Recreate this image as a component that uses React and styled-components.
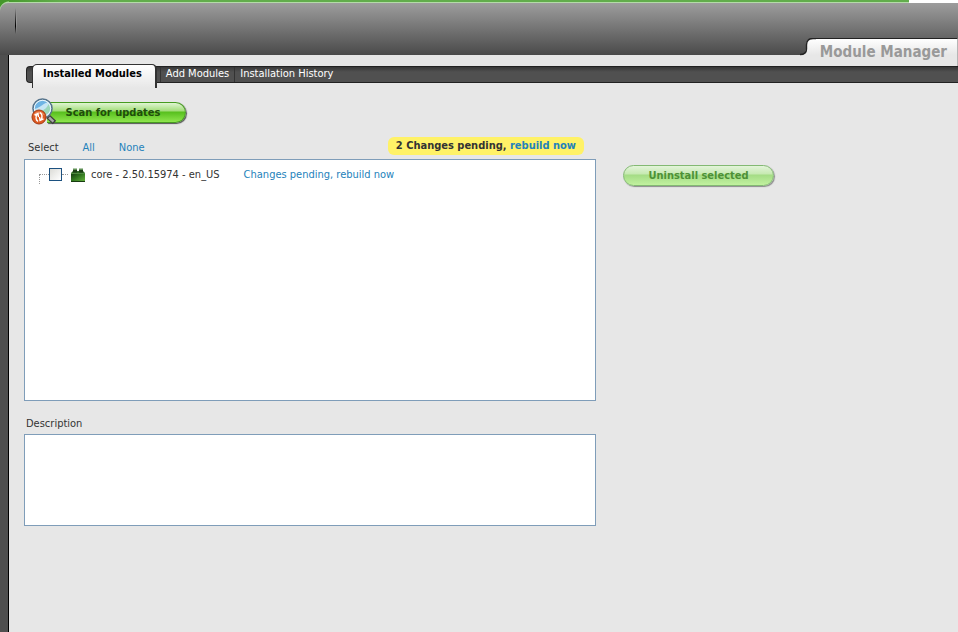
import React, { useState } from "react";
import styled, { createGlobalStyle } from "styled-components";

const TABS = ["Installed Modules", "Add Modules", "Installation History"];

const MagnifierIcon = () => (
  <svg width="26" height="28" viewBox="0 0 26 28" aria-hidden="true">
    <path d="M17 18.500l6.500 6" stroke="#3d3d3d" strokeWidth="5" />
    <path d="M18 19.500l4.500 4.200" stroke="#a8a8a8" strokeWidth="2.400" />
    <circle cx="11.500" cy="10.500" r="9.500" fill="#c7e6f4" stroke="#56748c" strokeWidth="1.600" />
    <path d="M3.500 11a8 8 0 0 1 13-6.500C12.500 5 10.500 9 3.500 11z" fill="#6fb4e4" />
    <path d="M10 13q6-2 7.500-7q3.500 5 0 9q-4 4-7.500-2z" fill="#9bd6b8" />
    <circle cx="11.500" cy="10.500" r="8.200" fill="none" stroke="#eaf6fc" />
    <circle cx="8" cy="19" r="7" fill="#dd5a22" stroke="#a33a14" />
    <path d="M2.500 17a6 6 0 0 1 11 0q-5.500-2-11 0z" fill="#ee8a5e" />
    <path
      d="M7 23.500q-3.500-3-1-7M3.500 17.200L7 15.500l.5 3.500M9 14.500q3.500 3 1 7M12.500 20.800L9 22.500 8.500 19"
      fill="none"
      stroke="#fff"
      strokeWidth="1.400"
    />
  </svg>
);

const BrickIcon = () => (
  <svg width="14" height="14" viewBox="0 0 14 14" aria-hidden="true">
    <defs>
      <linearGradient id="brick" x2="1" y2="1">
        <stop stopColor="#123a10" />
        <stop offset="0.500" stopColor="#347a22" />
        <stop offset="1" stopColor="#67b43f" />
      </linearGradient>
    </defs>
    <path d="M0 5l2-2h10l2 2v8H0z" fill="#2e6a25" />
    <path d="M0 5h14v8.500H0z" fill="url(#brick)" />
    <path d="M2 1h4v3.500H2zM8 1h4v3.500H8z" fill="#1a3d16" />
    <path d="M2 .5h4v1.500H2zM8 .5h4v1.500H8z" fill="#5f8f55" />
    <path d="M0 5h14v1H0z" fill="#4f8a41" />
    <path d="M0 13h14v1H0z" fill="#173c10" />
  </svg>
);

const TitleCurve = () => (
  <svg width="16" height="28" viewBox="0 0 16 28" aria-hidden="true">
    <defs>
      <linearGradient id="title" x2="0" y2="1">
        <stop stopColor="#fff" />
        <stop offset="0.600" stopColor="#e7e7e7" />
      </linearGradient>
    </defs>
    <path d="M0 28V17Q6 17 6 11V7Q6 1 13 1h3v27z" fill="url(#title)" />
    <path d="M0 16.500Q6.500 16.500 6.500 11V7Q6.500 .5 13 .5h3" fill="none" stroke="#222" strokeWidth="1.400" />
  </svg>
);

const App = () => {
  const [tab, setTab] = useState(TABS[0]);
  const [checked, setChecked] = useState(false);
  const [description, setDescription] = useState("");

  return (
    <>
      <GlobalStyle />
      <TopStrip />
      <Header>
        <HeaderMark />
      </Header>
      <Page>
        <TitleRow>
          <TitleCurve />
          <Title>Module Manager</Title>
        </TitleRow>
        <TabBar>
          {TABS.map(name => (
            <Tab key={name} $active={name === tab} onClick={() => setTab(name)}>
              {name}
            </Tab>
          ))}
        </TabBar>
        <Content>
          <ScanRow>
            <MagnifierIcon />
            <ScanButton>Scan for updates</ScanButton>
          </ScanRow>
          <Columns>
            <Main>
              <SelectRow>
                <span>Select</span>
                <Link href="#all" onClick={() => setChecked(true)}>All</Link>
                <Link href="#none" onClick={() => setChecked(false)}>None</Link>
                <Notice>
                  2 Changes pending, <Link href="#rebuild">rebuild now</Link>
                </Notice>
              </SelectRow>
              <ModuleList>
                <Module>
                  <Branch />
                  <Checkbox
                    id="core"
                    type="checkbox"
                    checked={checked}
                    onChange={e => setChecked(e.target.checked)}
                  />
                  <Twig />
                  <BrickIcon />
                  <ModuleName htmlFor="core">core - 2.50.15974 - en_US</ModuleName>
                  <Link href="#rebuild">Changes pending, rebuild now</Link>
                </Module>
              </ModuleList>
              <DescriptionLabel htmlFor="description">Description</DescriptionLabel>
              <Description
                id="description"
                value={description}
                onChange={e => setDescription(e.target.value)}
              />
            </Main>
            <UninstallButton>Uninstall selected</UninstallButton>
          </Columns>
        </Content>
      </Page>
    </>
  );
};

const GlobalStyle = createGlobalStyle`
  * {
    box-sizing: border-box;
  }

  html,
  body,
  #root {
    height: 100%;
  }

  body {
    margin: 0;
    overflow: hidden;
    background: #e7e7e7;
    color: #333;
    font-family: "DejaVu Sans Condensed", "Noto Sans", sans-serif;
    font-size: 11px;
    line-height: 14px;
  }

  #root {
    display: flex;
    flex-direction: column;
  }

  button,
  textarea {
    font: inherit;
  }

  svg {
    display: block;
    flex: none;
  }
`;

const TopStrip = styled.div`
  flex: none;
  height: 11px;
  margin: 0 49px -8px 0;
  background:
    radial-gradient(circle at 9px 11px, #b4dba8 9px, #44972b 10px) 0 0 / 9px 11px no-repeat,
    linear-gradient(transparent 2px, #b4dba8 2px),
    linear-gradient(90deg, #44972b, #62ad4c 60px);
  box-shadow: 49px 0 #fff;
`;

const Header = styled.header`
  position: relative;
  flex: none;
  height: 52px;
  padding: 5px 15px;
  border-top-left-radius: 8px;
  background: linear-gradient(#9d9d9d, #4a4a4a);
`;

const HeaderMark = styled.div`
  width: 2px;
  height: 26px;
  background:
    linear-gradient(transparent, #000 70%, transparent) 0 0 / 1px 100% no-repeat,
    linear-gradient(transparent, #999 50%, transparent) 1px 0 / 1px 100% no-repeat;
`;

const Page = styled.main`
  flex: 1;
  border-left: 8px solid #4f4f4f;
  box-shadow: inset 1px 0 #000;
`;

const TitleRow = styled.div`
  position: relative;
  display: flex;
  justify-content: flex-end;
  height: 28px;
  margin-top: -17px;
`;

const Title = styled.h1`
  margin: 0;
  padding: 4px 10px 0 4px;
  border-top: 1px solid #222;
  border-right: 1px solid #b5b5b5;
  background: linear-gradient(#fff, #e7e7e7 16px);
  color: #999;
  font-size: 15px;
  line-height: 18px;
`;

const TabBar = styled.nav`
  display: flex;
  height: 17px;
  margin-left: 18px;
  padding-left: 5px;
  border: solid #222;
  border-width: 1px 0 1px 1px;
  border-radius: 4px 0 0 4px;
  background: linear-gradient(#383838, #505050 5px);
`;

const Tab = styled.button`
  height: ${({ $active }) => ($active ? "24px" : "15px")};
  margin-top: ${({ $active }) => ($active ? "-3px" : "0")};
  margin-right: ${({ $active }) => ($active ? "3px" : "0")};
  padding: ${({ $active }) => ($active ? "0 13px 5px 10px" : "0 5px 1px")};
  border: 0 solid #333;
  border-width: ${({ $active }) => ($active ? "1px 2px 0 1px" : "0 0 0 1px")};
  border-radius: ${({ $active }) => ($active ? "5px 5px 0 0" : "0")};
  background: ${({ $active }) => ($active ? "linear-gradient(#fff, #e7e7e7)" : "none")};
  color: ${({ $active }) => ($active ? "#000" : "#fff")};
  font-weight: ${({ $active }) => ($active ? "bold" : "normal")};
  line-height: 14px;
  white-space: nowrap;
`;

const Content = styled.div`
  padding: 15px 16px;
`;

const ScanRow = styled.div`
  display: flex;
  align-items: flex-start;
  padding-left: 7px;

  svg {
    z-index: 1;
  }
`;

const pill = `
  height: 21px;
  padding: 1px 0 0;
  border-radius: 11px;
  font-weight: bold;
`;

const ScanButton = styled.button`
  ${pill}
  width: 139px;
  margin: 4px 0 0 -10px;
  padding-right: 6px;
  border: 1px solid #469b20;
  border-left: 0;
  border-radius: 0 11px 11px 0;
  background: linear-gradient(#e0f5d3, #a2dd79 8px, #57bf1d 9px, #8fe64e);
  box-shadow: 1px 1px 1px #555;
  color: #204d0b;
`;

const UninstallButton = styled.button`
  ${pill}
  width: 151px;
  margin-top: 39px;
  border: 1px solid #83b973;
  background: linear-gradient(#e3f4da, #c6e9b1 8px, #a4dc85 9px, #c1f19f);
  box-shadow: 1px 1px 1px #8b8b8b;
  color: #4d9136;
`;

const Columns = styled.div`
  display: flex;
  align-items: flex-start;
  gap: 27px;
`;

const Main = styled.div`
  flex: 0 1 572px;
`;

const SelectRow = styled.div`
  display: flex;
  align-items: flex-end;
  gap: 24px;
  height: 29px;
  padding-left: 4px;
`;

const Link = styled.a`
  color: #2482bb;
  text-decoration: none;
`;

const Notice = styled.strong`
  margin: 0 12px 0 auto;
  padding: 2px 8px;
  border-radius: 6px;
  background: #fff267;
`;

const ModuleList = styled.div`
  height: 242px;
  margin-top: 4px;
  padding: 5px 14px;
  border: 1px solid #7f9db9;
  background: #fff;
`;

const Module = styled.div`
  display: flex;
  align-items: center;
`;

const Branch = styled.span`
  width: 10px;
  height: 10px;
  margin-top: 9px;
  border: dotted #999;
  border-width: 1px 0 0 1px;
`;

const Twig = styled.span`
  width: 6px;
  margin-right: 3px;
  border-top: 1px dotted #999;
`;

const Checkbox = styled.input`
  appearance: none;
  width: 13px;
  height: 13px;
  margin: 0;
  border: 1px solid #1c5180;
  background: linear-gradient(135deg, #dcdcd7, #fff);

  &:checked {
    background: #21a121;
  }
`;

const ModuleName = styled.label`
  margin: 0 24px 0 6px;
`;

const DescriptionLabel = styled.label`
  display: block;
  margin: 16px 0 3px 2px;
`;

const Description = styled.textarea`
  display: block;
  width: 100%;
  height: 92px;
  padding: 4px;
  border: 1px solid #7f9db9;
  outline: none;
  resize: none;
`;

export default App;
